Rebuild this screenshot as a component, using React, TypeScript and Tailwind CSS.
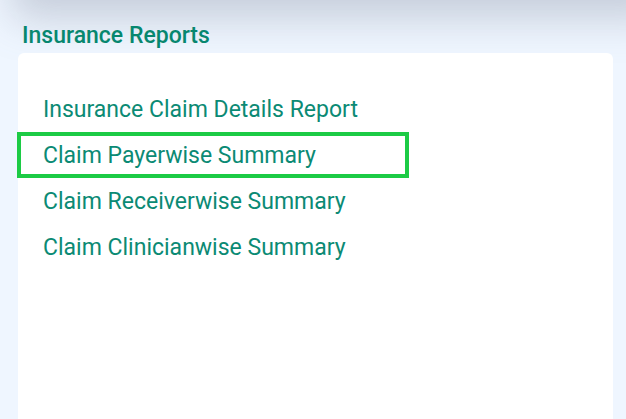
import React from "react";

const items = [
  "Insurance Claim Details Report",
  "Claim Payerwise Summary",
  "Claim Receiverwise Summary",
  "Claim Clinicianwise Summary",
];

export default function App() {
  return (
    <div
      className="relative w-[626px] h-[419px] overflow-hidden bg-[#eff6ff]"
      style={{ fontFamily: "Roboto, 'Noto Sans', sans-serif" }}
    >
      <div className="absolute -top-[40px] left-[30px] right-[-20px] h-[40px] bg-[#e5e7eb] shadow-[0_0_40px_18px_rgba(120,130,150,0.35)]" />
      <div className="relative flex flex-col pt-[22px] pl-[18px] pr-[13px]">
        <h2 className="pl-[4px] text-[23px] leading-[28px] font-medium text-[#07876f]">
          Insurance Reports
        </h2>
        <div className="mt-[3px] h-[400px] rounded-[6px] bg-white pt-[33px]">
          {items.map((t, i) => (
            <div
              key={t}
              className={
                "-ml-px w-[392px] h-[46px] flex items-center pt-[2px] pl-[22px] border-[4px] text-[23px] text-[#0b8a74] " +
                (i === 1 ? "border-[#1ccb45]" : "border-transparent")
              }
            >
              {t}
            </div>
          ))}
        </div>
      </div>
    </div>
  );
}
